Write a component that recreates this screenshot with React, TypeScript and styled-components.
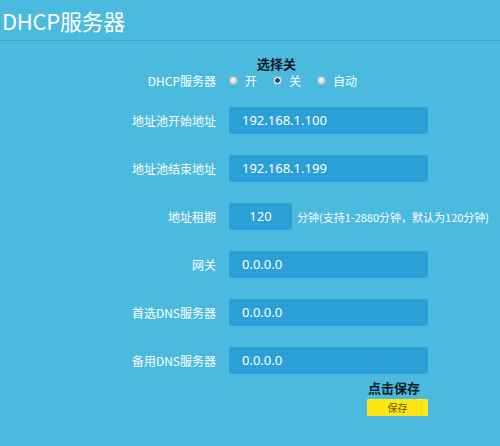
import styled, { createGlobalStyle } from 'styled-components';

const GlobalStyle = createGlobalStyle`
  html, body {
    margin: 0;
    padding: 0;
    background: #4bbadf;
  }
  body {
    font-family: "Noto Sans CJK SC", "Noto Sans", sans-serif;
    color: #fff;
  }
`;

const Page = styled.div`
  width: 500px;
  height: 446px;
  background: #4bbadf;
  overflow: hidden;
`;

const Header = styled.div`
  height: 41px;
  border-bottom: 1px solid #3aa2d8;
  padding-left: 2px;
  box-sizing: border-box;
`;

const Title = styled.h1`
  margin: 0;
  font-size: 22px;
  font-weight: 400;
  line-height: 40px;
  letter-spacing: -0.3px;
`;

const Form = styled.div`
  display: grid;
  grid-template-columns: 216px 200px;
  column-gap: 13px;
  align-items: center;
  padding-top: 16px;
`;

const Note = styled.div<{ $indent: number }>`
  grid-column: 2;
  padding-left: ${p => p.$indent}px;
  font-size: 13px;
  font-weight: 700;
  color: #0d1a24;
  line-height: 14px;
`;

const Label = styled.div`
  text-align: right;
  font-size: 12px;
  line-height: 27px;
  white-space: nowrap;
`;

const Field = styled.div`
  display: flex;
  align-items: center;
  height: 27px;
`;

const Radios = styled.div`
  display: flex;
  align-items: center;
  gap: 16px;
  font-size: 12px;
`;

const Option = styled.label`
  display: flex;
  align-items: center;
  gap: 7px;
`;

const Dot = styled.span<{ $on?: boolean }>`
  width: 9px;
  height: 9px;
  border-radius: 50%;
  box-sizing: border-box;
  border: 1px solid #aab6bc;
  background: ${p =>
    p.$on
      ? 'radial-gradient(circle, #1c4b78 0 2px, #f4f6f7 2.6px)'
      : 'radial-gradient(circle at 40% 35%, #f6f6f6, #bfc4c7)'};
`;

const Input = styled.div<{ $w?: number; $center?: boolean }>`
  flex-shrink: 0;
  width: ${p => p.$w ?? 199}px;
  height: 27px;
  background: #2ba0d8;
  border-radius: 2px;
  box-sizing: border-box;
  padding-left: ${p => (p.$center ? 0 : 13)}px;
  text-align: ${p => (p.$center ? 'center' : 'left')};
  font-family: "Noto Sans", sans-serif;
  font-size: 13px;
  line-height: 27px;
`;

const Hint = styled.span`
  margin-left: 5px;
  font-size: 11px;
  white-space: nowrap;
`;

const Row = styled.div<{ $top: number }>`
  display: contents;
  & > * {
    margin-top: ${p => p.$top}px;
  }
`;

const SaveBlock = styled.div`
  grid-column: 2;
  display: flex;
  flex-direction: column;
  align-items: flex-start;
  padding-left: 138px;
  margin-top: 7px;
`;

const SaveNote = styled.div`
  font-size: 13px;
  font-weight: 700;
  color: #0d1a24;
  line-height: 14px;
  padding-left: 1px;
`;

const SaveButton = styled.button`
  margin-top: 4px;
  width: 61px;
  height: 17px;
  border: none;
  border-radius: 1px;
  background: #ffe617;
  color: #6b5a10;
  font-family: "Noto Sans CJK SC", sans-serif;
  font-size: 10px;
  line-height: 17px;
  padding: 0;
`;

const fields = [
  { label: '地址池开始地址', value: '192.168.1.100' },
  { label: '地址池结束地址', value: '192.168.1.199' },
];

const more = [
  { label: '网关', value: '0.0.0.0' },
  { label: '首选DNS服务器', value: '0.0.0.0' },
  { label: '备用DNS服务器', value: '0.0.0.0' },
];

export default function App() {
  return (
    <Page>
      <GlobalStyle />
      <Header>
        <Title>DHCP服务器</Title>
      </Header>
      <Form>
        <Note $indent={28}>选择关</Note>
        <Row $top={-4}>
          <Label>DHCP服务器</Label>
          <Radios>
            <Option><Dot />开</Option>
            <Option><Dot $on />关</Option>
            <Option><Dot />自动</Option>
          </Radios>
        </Row>
        {fields.map((f, i) => (
          <Row key={f.label} $top={i === 0 ? 13 : 21}>
            <Label>{f.label}</Label>
            <Field><Input>{f.value}</Input></Field>
          </Row>
        ))}
        <Row $top={21}>
          <Label>地址租期</Label>
          <Field>
            <Input $w={63} $center>120</Input>
            <Hint>分钟(支持1-2880分钟，默认为120分钟)</Hint>
          </Field>
        </Row>
        {more.map(f => (
          <Row key={f.label} $top={21}>
            <Label>{f.label}</Label>
            <Field><Input>{f.value}</Input></Field>
          </Row>
        ))}
        <SaveBlock>
          <SaveNote>点击保存</SaveNote>
          <SaveButton>保存</SaveButton>
        </SaveBlock>
      </Form>
    </Page>
  );
}
